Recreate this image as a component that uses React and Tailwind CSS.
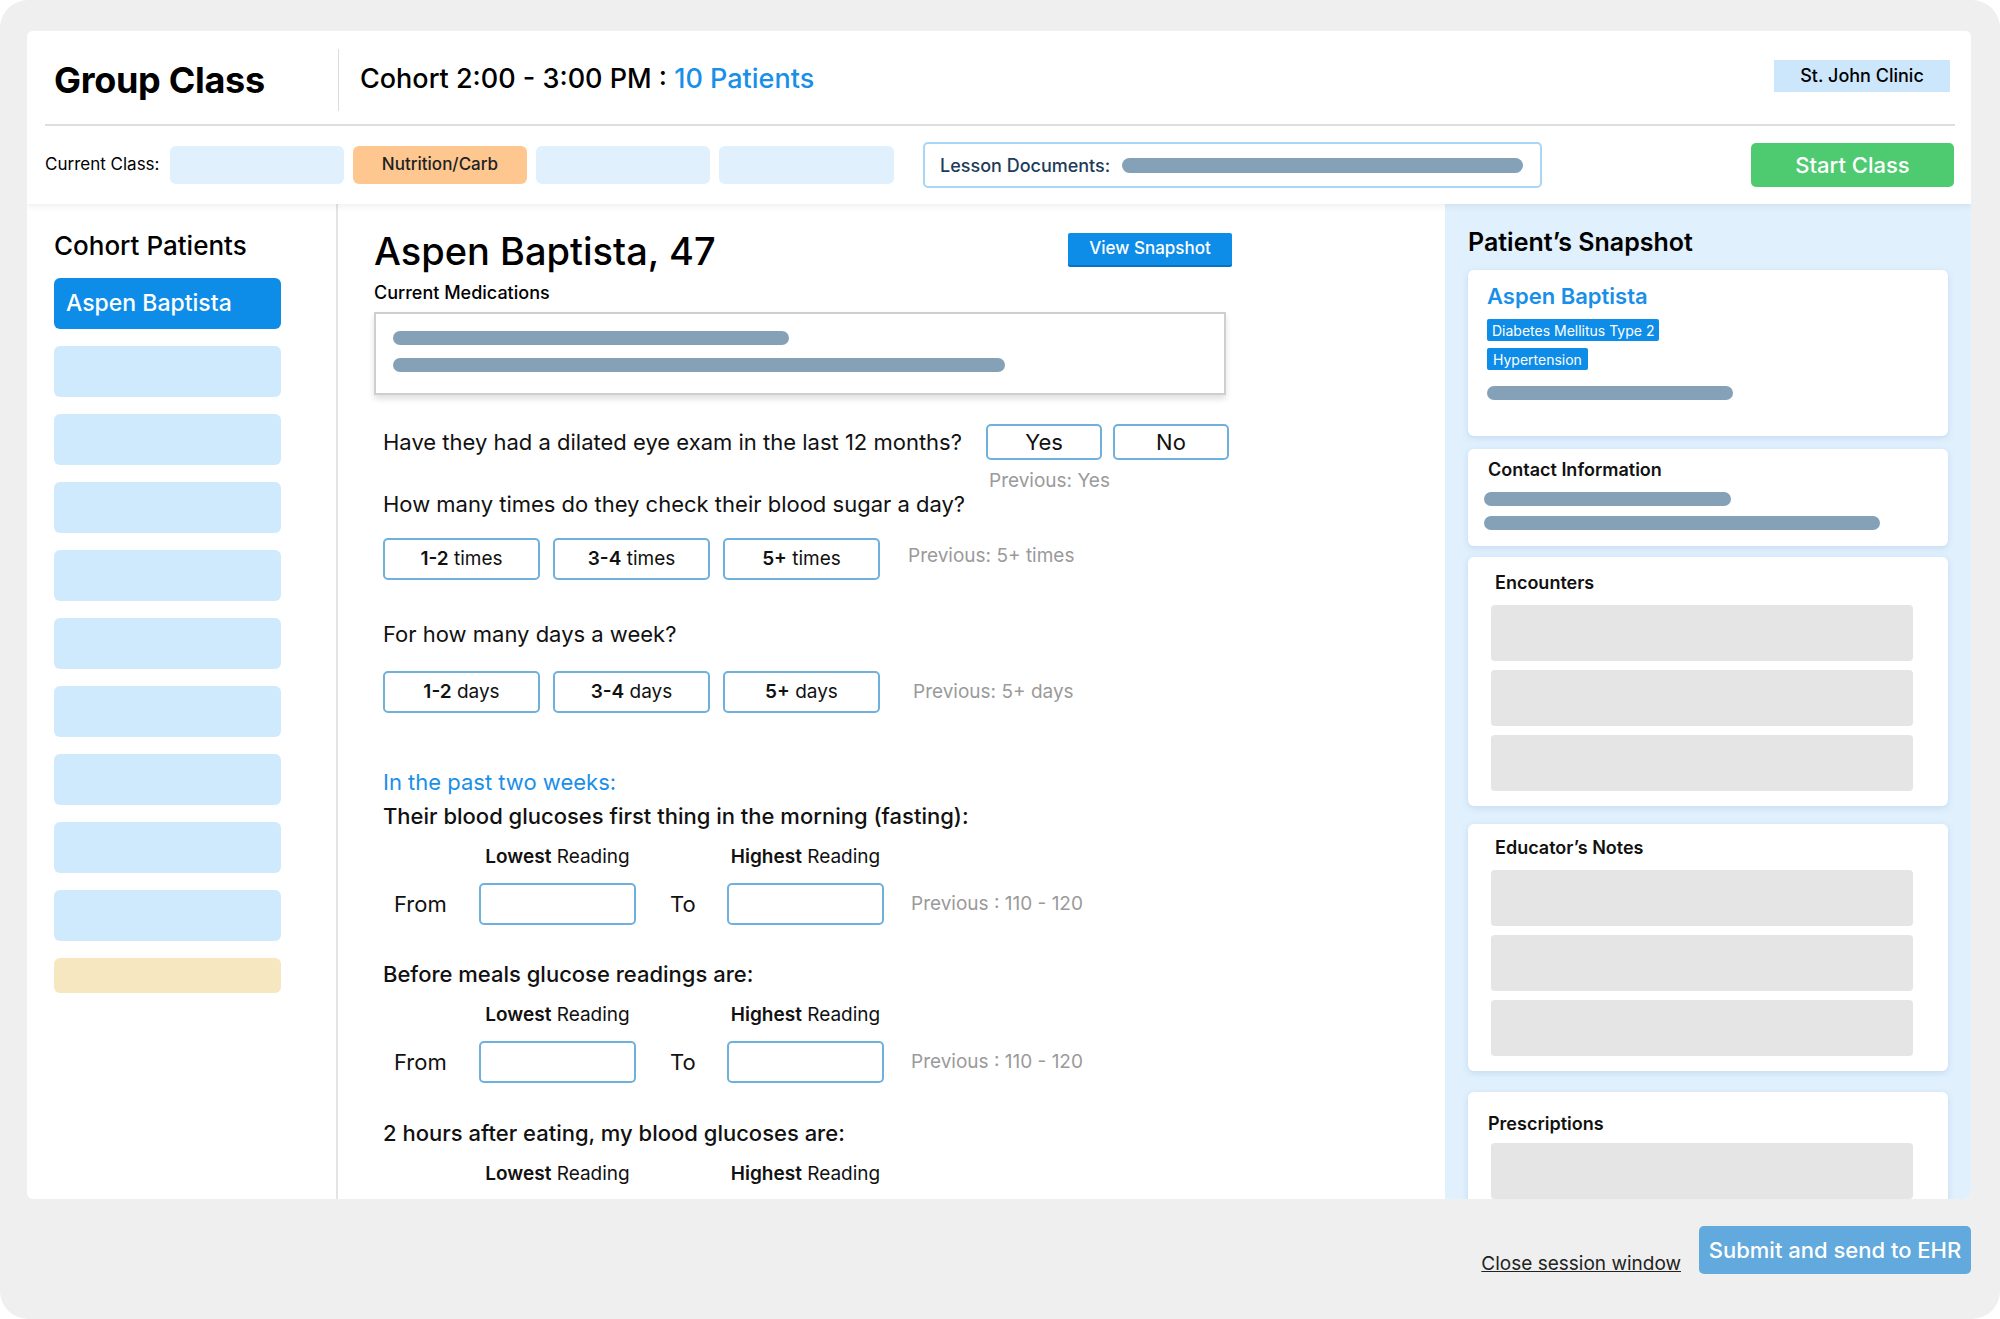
import React from 'react';

const font = { fontFamily: 'Inter, "Noto Sans", sans-serif' };

const Bar = ({ w, className = '' }) => (
  <div className={`h-[14px] rounded-full bg-[#85a1b7] ${className}`} style={{ width: w }} />
);

const ChoiceBtn = ({ strong, rest }) => (
  <button className="h-[42px] w-[157px] rounded-[5px] border-2 border-[#6fb1dc] bg-white text-[19px] text-[#111]">
    <span className="font-semibold">{strong}</span> {rest}
  </button>
);

const ReadingBlock = ({ title, titleMt, showRow = true }) => (
  <div>
    <div className={`${titleMt} text-[22px] leading-[28px] font-medium text-[#111]`}>{title}</div>
    <div className="mt-[15px] flex text-[19px] leading-[24px] text-[#111]">
      <div className="w-[96px]" />
      <div className="w-[157px] text-center">
        <span className="font-semibold">Lowest</span> Reading
      </div>
      <div className="w-[91px]" />
      <div className="w-[157px] text-center">
        <span className="font-semibold">Highest</span> Reading
      </div>
    </div>
    {showRow && (
      <div className="mt-[14px] flex items-center text-[22px] text-[#111]">
        <div className="w-[96px] pl-[11px]">From</div>
        <div className="h-[42px] w-[157px] rounded-[5px] border-2 border-[#6fb1dc]" />
        <div className="w-[91px] pl-[34px]">To</div>
        <div className="h-[42px] w-[157px] rounded-[5px] border-2 border-[#6fb1dc]" />
        <div className="ml-[27px] text-[19px] text-[#9a9a9a]">Previous : 110 - 120</div>
      </div>
    )}
  </div>
);

const SnapCard = ({ title, titlePl, titlePt, blocksMt, count, className = '' }) => (
  <div className={`rounded-md bg-white shadow-[0_2px_6px_rgba(120,160,200,0.25)] ${className}`}>
    <div className={`${titlePl} ${titlePt} text-[18px] leading-[24px] font-semibold text-[#111]`}>{title}</div>
    <div className={`${blocksMt} flex flex-col gap-[9px] pl-[23px]`}>
      {Array.from({ length: count }).map((_, i) => (
        <div key={i} className="h-[56px] w-[422px] rounded-[4px] bg-[#e5e5e5]" />
      ))}
    </div>
  </div>
);

export default function App() {
  return (
    <div className="h-[1319px] w-[2000px] bg-white" style={font}>
      <div className="flex h-full w-full flex-col rounded-[28px] bg-[#efefef] pl-[27px] pr-[29px] pt-[31px]">
        <div className="flex h-[1168px] w-[1944px] flex-col overflow-hidden rounded-md bg-white">
          {/* Header */}
          <div className="relative z-10 h-[173px] shrink-0 bg-white shadow-[0_3px_6px_rgba(0,0,0,0.06)]">
            <div className="flex h-[93px] items-center pt-[4px]">
              <div className="w-[311px] pl-[27px] text-[36px] font-bold tracking-[-0.3px] text-black">Group Class</div>
              <div className="h-[62px] w-px bg-[#dcdcdc]" />
              <div className="pl-[21px] text-[27px] font-medium text-black">
                Cohort 2:00 - 3:00 PM : <span className="text-[#1a8fe8]">10 Patients</span>
              </div>
              <div className="ml-auto mr-[21px] -mt-[8px] flex h-[32px] w-[176px] items-center justify-center bg-[#cce6fb] text-[18px] font-medium text-black">
                St. John Clinic
              </div>
            </div>
            <div className="ml-[18px] mr-[16px] h-[2px] bg-[#dedede]" />
            <div className="flex h-[78px] items-center pl-[18px] pr-[17px]">
              <div className="w-[125px] text-[17px] text-black">Current Class:</div>
              <div className="flex gap-[9px]">
                <div className="h-[38px] w-[174px] rounded-[6px] bg-[#e0f0fd]" />
                <div className="flex h-[38px] w-[174px] items-center justify-center rounded-[6px] bg-[#fec78f] text-[17px] font-medium text-[#222]">
                  Nutrition/Carb
                </div>
                <div className="h-[38px] w-[174px] rounded-[6px] bg-[#e0f0fd]" />
                <div className="h-[38px] w-[175px] rounded-[6px] bg-[#e0f0fd]" />
              </div>
              <div className="ml-[29px] flex h-[46px] w-[619px] items-center rounded-[5px] border-2 border-[#a8d6f7] pl-[15px] pr-[17px]">
                <span className="text-[18px] font-medium text-[#1d3b5a]">Lesson Documents:</span>
                <div className="ml-[12px] h-[15px] flex-1 rounded-full bg-[#85a1b7]" />
              </div>
              <button className="ml-auto h-[44px] w-[203px] rounded-[5px] bg-[#4ecb71] text-[22px] font-medium text-white">
                Start Class
              </button>
            </div>
          </div>

          {/* Body */}
          <div className="flex min-h-0 flex-1">
            {/* Left sidebar */}
            <div className="w-[311px] shrink-0 border-r-2 border-[#e4e4e4] pl-[27px] pt-[26px]">
              <div className="text-[26px] leading-[32px] font-medium text-black">Cohort Patients</div>
              <div className="mt-[16px] flex h-[51px] w-[227px] items-center rounded-[6px] bg-[#0d8de8] pl-[12px] text-[23px] font-medium text-white">
                Aspen Baptista
              </div>
              <div className="mt-[17px] flex flex-col gap-[17px]">
                {Array.from({ length: 9 }).map((_, i) => (
                  <div key={i} className="h-[51px] w-[227px] rounded-[6px] bg-[#d0eafd]" />
                ))}
                <div className="h-[35px] w-[227px] rounded-[6px] bg-[#f7e7c1]" />
              </div>
            </div>

            {/* Middle form */}
            <div className="w-[1107px] shrink-0 overflow-hidden pl-[36px] pt-[24px]">
              <div className="flex w-[858px] items-start justify-between">
                <div className="text-[38px] leading-[46px] font-medium text-black">Aspen Baptista, 47</div>
                <button className="mt-[5px] h-[32px] w-[164px] rounded-[2px] bg-[#0d8de8] text-[17px] font-medium text-white shadow-[0_2px_0_#0b72bd]">
                  View Snapshot
                </button>
              </div>
              <div className="mt-[7px] text-[18px] leading-[24px] font-medium text-black">Current Medications</div>
              <div className="mt-[7px] flex h-[83px] w-[852px] flex-col gap-[13px] border-2 border-[#cfcfcf] pl-[17px] pt-[17px] shadow-[0_4px_6px_rgba(0,0,0,0.12)]">
                <Bar w={396} />
                <Bar w={612} />
              </div>

              <div className="pl-[9px]">
                <div className="mt-[29px] flex items-center">
                  <div className="text-[22px] text-[#111]">Have they had a dilated eye exam in the last 12 months?</div>
                  <div className="ml-[24px] flex gap-[11px]">
                    <button className="h-[36px] w-[116px] rounded-[5px] border-2 border-[#6fb1dc] bg-white text-[22px] text-[#111]">Yes</button>
                    <button className="h-[36px] w-[116px] rounded-[5px] border-2 border-[#6fb1dc] bg-white text-[22px] text-[#111]">No</button>
                  </div>
                </div>
                <div className="mt-[9px] pl-[606px] text-[19px] leading-[24px] text-[#9a9a9a]">Previous: Yes</div>
                <div className="-mt-[3px] text-[22px] leading-[28px] text-[#111]">How many times do they check their blood sugar a day?</div>
                <div className="mt-[20px] flex items-center gap-[13px]">
                  <ChoiceBtn strong="1-2" rest="times" />
                  <ChoiceBtn strong="3-4" rest="times" />
                  <ChoiceBtn strong="5+" rest="times" />
                  <div className="ml-[15px] -mt-[6px] text-[19px] text-[#9a9a9a]">Previous: 5+ times</div>
                </div>
                <div className="mt-[40px] text-[22px] leading-[28px] text-[#111]">For how many days a week?</div>
                <div className="mt-[23px] flex items-center gap-[13px]">
                  <ChoiceBtn strong="1-2" rest="days" />
                  <ChoiceBtn strong="3-4" rest="days" />
                  <ChoiceBtn strong="5+" rest="days" />
                  <div className="ml-[20px] text-[19px] text-[#9a9a9a]">Previous: 5+ days</div>
                </div>
                <div className="mt-[55px] text-[22px] leading-[28px] text-[#1a8fe8]">In the past two weeks:</div>
                <ReadingBlock title="Their blood glucoses first thing in the morning (fasting):" titleMt="mt-[6px]" />
                <ReadingBlock title="Before meals glucose readings are:" titleMt="mt-[35px]" />
                <ReadingBlock title="2 hours after eating, my blood glucoses are:" titleMt="mt-[36px]" showRow={false} />
              </div>
            </div>

            {/* Right snapshot */}
            <div className="flex-1 overflow-hidden rounded-br-md bg-[#e0f0fd] pl-[23px] pt-[22px]">
              <div className="text-[25px] leading-[32px] font-semibold text-black">Patient’s Snapshot</div>
              <div className="mt-[12px] h-[166px] w-[480px] rounded-md bg-white pl-[19px] pt-[12px] shadow-[0_2px_6px_rgba(120,160,200,0.25)]">
                <div className="text-[22px] leading-[28px] font-semibold text-[#1a8fe8]">Aspen Baptista</div>
                <div className="mt-[9px] flex h-[22px] w-fit items-center rounded-[2px] bg-[#0d8de8] px-[5px] text-[14px] text-white">
                  Diabetes Mellitus Type 2
                </div>
                <div className="mt-[7px] flex h-[22px] w-fit items-center rounded-[2px] bg-[#0d8de8] px-[6px] text-[14px] text-white">
                  Hypertension
                </div>
                <Bar w={246} className="mt-[16px]" />
              </div>
              <div className="mt-[13px] h-[97px] w-[480px] rounded-md bg-white pt-[9px] shadow-[0_2px_6px_rgba(120,160,200,0.25)]">
                <div className="pl-[20px] text-[18px] leading-[24px] font-semibold text-[#111]">Contact Information</div>
                <div className="mt-[10px] flex flex-col gap-[10px] pl-[16px]">
                  <Bar w={247} />
                  <Bar w={396} />
                </div>
              </div>
              <SnapCard title="Encounters" titlePl="pl-[27px]" titlePt="pt-[14px]" blocksMt="mt-[10px]" count={3} className="mt-[11px] h-[249px] w-[480px]" />
              <SnapCard title="Educator’s Notes" titlePl="pl-[27px]" titlePt="pt-[12px]" blocksMt="mt-[10px]" count={3} className="mt-[18px] h-[247px] w-[480px]" />
              <SnapCard title="Prescriptions" titlePl="pl-[20px]" titlePt="pt-[20px]" blocksMt="mt-[7px]" count={1} className="mt-[21px] h-[140px] w-[480px]" />
            </div>
          </div>
        </div>

        {/* Footer */}
        <div className="mt-[27px] flex items-end justify-end gap-[18px]">
          <a className="-mb-[4px] text-[19px] text-[#222] underline">Close session window</a>
          <button className="h-[48px] w-[272px] rounded-[5px] bg-[#62a9dd] text-[22px] font-medium text-white">
            Submit and send to EHR
          </button>
        </div>
      </div>
    </div>
  );
}
